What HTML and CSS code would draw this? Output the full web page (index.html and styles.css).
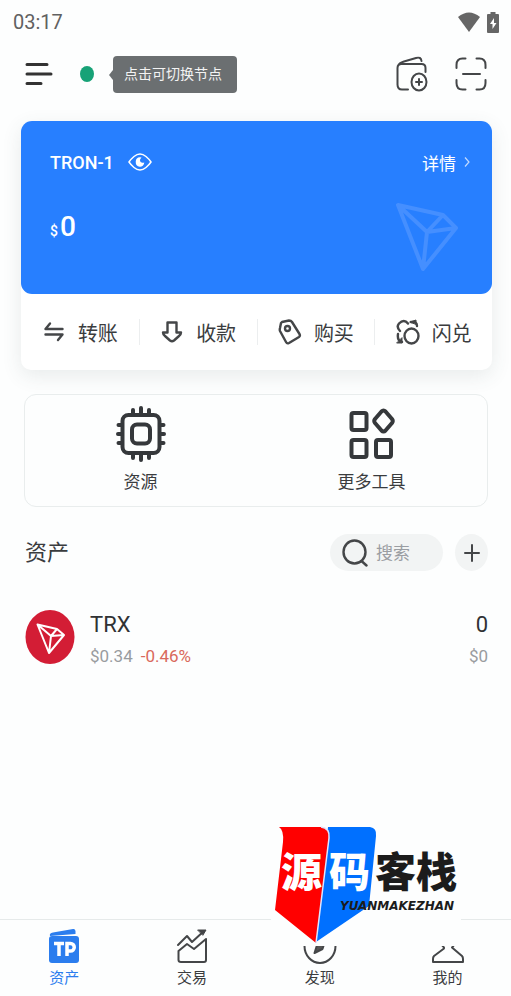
FILE: index.html
```html
<!DOCTYPE html>
<html lang="zh-CN">
  <head>
    <meta charset="UTF-8" />
    <meta name="viewport" content="width=device-width, initial-scale=1.0" />
    <title>资产</title>
    <link rel="stylesheet" href="styles.css">
  </head>
  <body>
    <div class="app">
      <div class="status-bar">
        <span>03:17</span>
        <div class="status-icons">
          <svg width="22" height="20" viewBox="0 0 22 20"><path d="M0 5Q11-4 22 5L11 20Z" fill="#666" /></svg>
          <svg width="12" height="21" viewBox="0 0 12 21">
            <path d="M3.500 0h5v2H11q1 0 1 1v17q0 1-1 1H1q-1 0-1-1V3q0-1 1-1h2.500z" fill="#666" />
            <path d="M7 6L3 12h2.500v5L9.500 11H7z" fill="#fff" />
          </svg>
        </div>
      </div>

      <header class="top-bar">
        <button class="icon-btn" aria-label="菜单">
          <svg width="28" height="24" viewBox="0 0 28 24" class="line thick"><path d="M2 2.500h20M2 12h24M2 21.500h14" /></svg>
        </button>
        <span class="node-dot"></span>
        <div class="node-tip">点击可切换节点</div>
        <div class="top-actions">
          <button class="icon-btn" aria-label="添加钱包">
            <svg width="32" height="36" viewBox="0 0 32 36" class="line">
              <path d="M12 33.500H6q-4.500 0-4.500-5V12q0-4 4-4h20q4 0 4 4v4M2 10Q3 7 8 5.500L20 2q5-1.500 5.500 3" />
              <ellipse cx="23" cy="26" rx="7.500" ry="8.500" />
              <path d="M23 23v6M20 26h6" />
            </svg>
          </button>
          <button class="icon-btn" aria-label="扫一扫">
            <svg width="32" height="34" viewBox="0 0 32 34" class="line">
              <path d="M1.500 11V8q0-6.500 6-6.500h3M21.500 1.500h3q6 0 6 6.500v3M30.500 23v3q0 6.500-6 6.500h-3M10.500 32.500h-3q-6 0-6-6.500v-3" />
              <path d="M8 17h17" />
            </svg>
          </button>
        </div>
      </header>

      <main>
        <section class="wallet">
          <div class="wallet-card">
            <div class="wallet-head">
              <span class="wallet-name">TRON-1</span>
              <button class="icon-btn" aria-label="隐藏余额">
                <svg width="24" height="18" viewBox="0 0 24 18">
                  <path d="M1 9Q3 6 6 3.500Q12-1.500 18 3.500Q21 6 23 9Q21 12 18 14.500Q12 19.500 6 14.500Q3 12 1 9Z" fill="none" stroke="#fff" stroke-width="1.500" />
                  <path d="M12 4.200A4.300 4.800 0 1 0 16.300 9.500Q12.800 10.500 12 8Q11.600 6 13.500 4.500Z" fill="#fff" />
                </svg>
              </button>
              <a class="detail" href="#">详情
                <svg width="6" height="10" viewBox="0 0 6 10"><path d="M1 .5L5 5L1 9.500" fill="none" stroke="#c3dbff" stroke-width="1.200" /></svg>
              </a>
            </div>
            <div class="balance"><small>$</small>0</div>
            <svg class="tron-mark" width="62" height="68" viewBox="0 0 62 68">
              <path d="M2 2L47 12L60 25L27 66ZM2 2L31 29L60 25M31 29L47 12M31 29L27 66" />
            </svg>
          </div>
          <div class="actions">
            <button>
              <svg width="24" height="24" viewBox="0 0 24 24" class="line mid"><path d="M20.500 9H3.500L8 3.500M3.500 14.500h17L16 20" /></svg>
              转账
            </button>
            <button>
              <svg width="24" height="24" viewBox="0 0 24 24" class="line mid"><path d="M7.500 2.500h9v10h4.500q0 2-2 3.500L14 20.500q-2 1.500-4 0L5 16q-2-1.500-2-3.500h4.500z" /></svg>
              收款
            </button>
            <button>
              <svg width="24" height="26" viewBox="0 0 24 26" class="line mid">
                <path d="M4 3L11 1.500Q13 1.500 14 3L21.500 15Q22.500 17 21 18L11 24Q9 25 8 23L2 12Q1.500 11 2 9L3 4Z" />
                <circle cx="9.500" cy="9.500" r="2.500" />
              </svg>
              购买
            </button>
            <button>
              <svg width="24" height="26" viewBox="0 0 24 26" class="line mid">
                <ellipse cx="15.500" cy="17" rx="7" ry="7.500" />
                <path d="M4 12Q0 8 3 4.500Q8-.5 12 4.500" />
                <path d="M15 3q6-1 6 4M2 15q-1 7 4 8" />
                <path d="M14 3L20 1v4zM1 24h5v-5z" fill="#444" stroke-width="1" />
              </svg>
              闪兑
            </button>
          </div>
        </section>

        <section class="tools">
          <button>
            <svg width="50" height="56" viewBox="0 0 50 56" class="line bold">
              <rect x="6.500" y="9" width="37" height="38" rx="6" />
              <rect x="16" y="18.500" width="18" height="19" rx="5" />
              <path d="M17 8V4M25 8V2M33 8V4M17 48v4M25 48v6M33 48v4M6 19H2.500M6 28H2M6 37H2.500M44 19h3.500M44 28h4M44 37h3.500" />
            </svg>
            资源
          </button>
          <button>
            <svg width="46" height="56" viewBox="0 0 46 56" class="line bold">
              <rect x="2.500" y="7" width="15" height="17" rx="2" />
              <rect x="2.500" y="34" width="15" height="17" rx="2" />
              <rect x="27" y="34" width="15" height="17" rx="2" />
              <path d="M32.500 5.500Q34.500 3.500 36.500 5.500L43 13Q44.500 15 43 17L36.500 24.500Q34.500 26.500 32.500 24.500L26 17Q24.500 15 26 13Z" />
            </svg>
            更多工具
          </button>
        </section>

        <section class="assets">
          <div class="assets-head">
            <h2>资产</h2>
            <label class="search">
              <svg width="26" height="28" viewBox="0 0 26 28" class="line mid"><ellipse cx="12.500" cy="13" rx="11" ry="11.500" /><path d="M19.500 22l5 4.500" /></svg>
              <input type="text" placeholder="搜索" aria-label="搜索" />
            </label>
            <button class="add-btn" aria-label="添加资产">
              <svg width="16" height="18" viewBox="0 0 16 18" class="line"><path d="M8 1v16M1 9h14" /></svg>
            </button>
          </div>
          <a class="asset" href="#">
            <svg width="50" height="56" viewBox="0 0 50 56">
              <ellipse cx="25" cy="28" rx="24.500" ry="27" fill="#d31d35" />
              <path d="M12.500 15.500L32 20L39 26L24 44ZM12.500 15.500L26 27L39 26M26 27L32 20M26 27L24 44" fill="none" stroke="#fff" stroke-width="2" stroke-linejoin="round" />
            </svg>
            <div class="asset-info">
              <div class="asset-name">TRX</div>
              <div class="asset-price"><span>$0.34</span><span class="down">-0.46%</span></div>
            </div>
            <div class="asset-amount">
              <div class="asset-name">0</div>
              <div class="asset-price">$0</div>
            </div>
          </a>
        </section>
      </main>

      <nav class="tab-bar">
        <a class="active" href="#">
          <svg width="32" height="36" viewBox="0 0 32 36">
            <path d="M2 8Q1 5 5 4.500L25 1Q27 .5 27.500 3V6Z" fill="#2b7dee" />
            <rect x="1" y="8" width="30" height="27" rx="3" fill="#2b7dee" />
            <path d="M6 15.500h10M11 15.500V28M19 28V15.500h3.500a3.500 3.500 0 0 1 0 7.500H19" fill="none" stroke="#fff" stroke-width="3.500" />
          </svg>
          资产
        </a>
        <a href="#">
          <svg width="32" height="36" viewBox="0 0 32 36" class="line">
            <path d="M2 17L11 8L16 14L28 3" />
            <path d="M22 2h8L27 7z" fill="#444648" stroke-width="1" />
            <path d="M2.500 23L11 16L18 21L30 11V32q0 2-2 2H5q-2.500 0-2.500-2z" />
          </svg>
          交易
        </a>
        <a href="#">
          <svg width="34" height="36" viewBox="0 0 34 36" class="line">
            <ellipse cx="17" cy="18" rx="15.500" ry="17" />
            <path d="M23 10L19.500 21L11.500 25L15 14Z" fill="#555" />
          </svg>
          发现
        </a>
        <a href="#">
          <svg width="32" height="36" viewBox="0 0 32 36" class="line">
            <path d="M12 19.500Q6 14 8 7Q10 2 16 2Q22 2 24 7Q26 14 20 19.500L30 28q1 1 1 3v3H1v-3q0-2 1-3L12 20.500" />
          </svg>
          我的
        </a>
      </nav>

      <div class="brand">
        <svg width="190" height="126" viewBox="0 0 190 126">
          <path d="M57 7H99Q106 8 105 16L98 86L45 122Z" fill="#0070ff" />
          <path d="M8 7H50Q59 8 58 18L45 123L4 90L12 22Q13 10 8 7Z" fill="#f00" />
          <path d="M50 7Q59 8 58 18L45 123" fill="none" stroke="#dfe5ff" stroke-width="1.500" />
          <text class="brand-cn" x="10" y="67" fill="#fff">源</text>
          <text class="brand-cn" x="58" y="67" fill="#fff">码</text>
          <text class="brand-cn" x="104" y="67" fill="#1c1c1c">客栈</text>
          <text class="brand-en" x="69" y="90" fill="#1c1c1c">YUANMAKEZHAN</text>
        </svg>
      </div>
    </div>
  </body>
</html>
```

FILE: styles.css
```css
* {
  box-sizing: border-box;
}
body {
  margin: 0;
  background-color: #fdfefe;
  color: #3a3c3e;
  font-family: Roboto, "Noto Sans CJK SC", sans-serif;
}
button {
  border: none;
  padding: 0;
  background: none;
  color: inherit;
  font: inherit;
  cursor: pointer;
}
a {
  color: inherit;
  text-decoration: none;
}
svg {
  display: block;
  flex-shrink: 0;
}
.app {
  position: relative;
  display: flex;
  flex-direction: column;
  min-height: 100vh;
}
.line {
  fill: none;
  stroke: #444648;
  stroke-width: 2;
  stroke-linecap: round;
  stroke-linejoin: round;
}
.mid {
  stroke-width: 2.4;
}
.thick {
  stroke: #333;
  stroke-width: 3;
}
.bold {
  stroke: #35383b;
  stroke-width: 4;
}

/* status bar */
.status-bar {
  display: flex;
  justify-content: space-between;
  align-items: center;
  height: 44px;
  padding: 0 12px 0 13px;
  color: #616161;
  font-size: 20px;
}
.status-icons {
  display: flex;
  gap: 7px;
}

/* header */
.top-bar {
  display: flex;
  align-items: center;
  height: 60px;
  padding: 0 24px 0 25px;
}
.node-dot {
  width: 14px;
  height: 16px;
  margin-left: 27px;
  border-radius: 50%;
  background-color: #17a277;
}
.node-tip {
  position: relative;
  margin-left: 19px;
  padding: 0 15px 0 11px;
  border-radius: 4px;
  background-color: #6b6f71;
  color: #f3f3f3;
  font-size: 14px;
  line-height: 37px;
}
.node-tip::before {
  content: "";
  position: absolute;
  left: -4px;
  top: 14px;
  border: solid transparent;
  border-width: 5px 4px 5px 0;
  border-right-color: #6b6f71;
}
.top-actions {
  display: flex;
  align-items: center;
  gap: 27px;
  margin-left: auto;
}

/* wallet card */
.wallet {
  margin: 17px 19px 0 21px;
  border-radius: 10px;
  background-color: #fff;
  box-shadow: 0 6px 20px rgba(60, 80, 80, 0.11);
}
.wallet-card {
  position: relative;
  height: 173px;
  padding: 27px 22px 0 29px;
  border-radius: 11px;
  background-color: #277fff;
  color: #fff;
}
.wallet-head {
  display: flex;
  align-items: center;
  height: 28px;
}
.wallet-name {
  margin-right: 14px;
  font-size: 18px;
  font-weight: 500;
}
.detail {
  display: flex;
  align-items: center;
  gap: 8px;
  margin-left: auto;
  font-size: 17px;
}
.balance {
  margin-top: 33px;
  font-size: 28px;
  font-weight: 500;
  line-height: 36px;
}
.balance small {
  margin-right: 2px;
  font-size: 14px;
}
.tron-mark {
  position: absolute;
  right: 34px;
  bottom: 23px;
  fill: none;
  stroke: #458fff;
  stroke-width: 4;
  stroke-linejoin: round;
}
.actions {
  display: grid;
  grid-template-columns: repeat(4, 1fr);
  padding: 25px 0;
}
.actions button {
  display: flex;
  justify-content: center;
  align-items: center;
  gap: 12px;
  height: 26px;
  font-size: 20px;
}
.actions button + button {
  border-left: 1px solid #eceeef;
}

/* tools */
.tools {
  display: grid;
  grid-template-columns: repeat(2, 1fr);
  margin: 24px 23px 0 24px;
  border: 1px solid #e9eded;
  border-radius: 12px;
}
.tools button {
  display: flex;
  flex-direction: column;
  align-items: center;
  gap: 8px;
  padding: 11px 0;
  font-size: 17px;
  line-height: 25px;
}

/* assets */
.assets {
  padding: 27px 23px 0 25px;
}
.assets-head {
  display: flex;
  align-items: center;
}
.assets-head h2 {
  margin: 0 auto 0 0;
  font-size: 22px;
  font-weight: 400;
  line-height: 36px;
}
.search {
  display: flex;
  align-items: center;
  gap: 8px;
  width: 113px;
  height: 37px;
  margin-right: 12px;
  padding: 0 12px;
  border-radius: 19px;
  background-color: #f2f4f4;
}
.search input {
  width: 100%;
  min-width: 0;
  border: none;
  padding: 0;
  background: none;
  outline: none;
  font-family: inherit;
  font-size: 17px;
}
.search input::placeholder {
  color: #9a9da2;
}
.add-btn {
  display: grid;
  place-items: center;
  width: 33px;
  height: 37px;
  border-radius: 50%;
  background-color: #f2f4f4;
}
.asset {
  display: flex;
  align-items: flex-start;
  gap: 15px;
  margin-top: 38px;
}
.asset-name {
  color: #303234;
  font-size: 22px;
  line-height: 32px;
}
.asset-price {
  display: flex;
  gap: 8px;
  color: #999c9f;
  font-size: 17px;
  line-height: 30px;
}
.asset-price .down {
  color: #d9695c;
}
.asset-amount {
  margin-left: auto;
  text-align: right;
}

/* tab bar */
.tab-bar {
  display: grid;
  grid-template-columns: repeat(4, 1fr);
  margin-top: auto;
  padding: 8px 0 6px;
  border-top: 1px solid #e6eaea;
}
.tab-bar a {
  display: flex;
  flex-direction: column;
  align-items: center;
  gap: 3px;
  padding-left: 1px;
  font-size: 15px;
  line-height: 23px;
}
.tab-bar .active {
  color: #2b7dee;
}

/* floating brand badge */
.brand {
  position: absolute;
  right: 50px;
  bottom: 50px;
  background-color: #fdfefe;
}
.brand-cn {
  font-family: "Noto Sans CJK SC", sans-serif;
  font-size: 41px;
  font-weight: 900;
}
.brand-en {
  font-family: "DejaVu Sans", sans-serif;
  font-size: 12px;
  font-style: italic;
  font-weight: 700;
}
```
